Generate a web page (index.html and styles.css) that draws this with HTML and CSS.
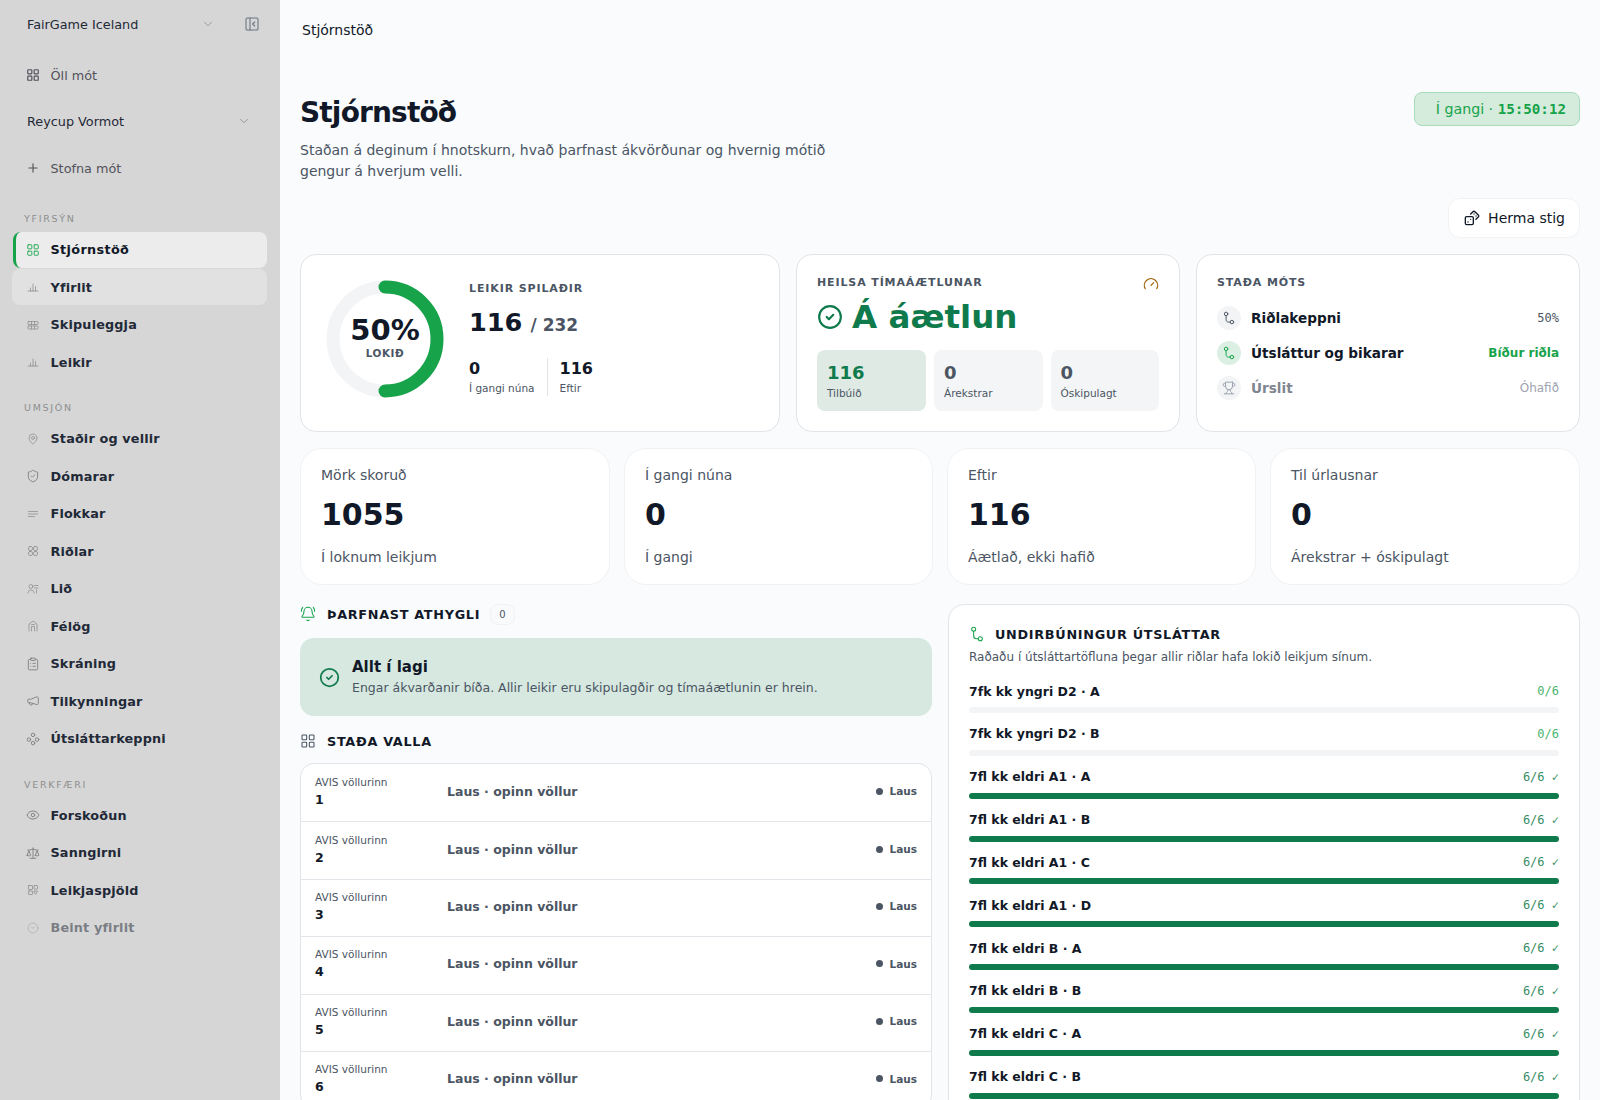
FILE: index.html
```html
<!DOCTYPE html>
<html lang="is">
<head>
  <meta charset="UTF-8">
  <meta name="viewport" content="width=device-width, initial-scale=1.0">
  <title>Stjórnstöð</title>
  <link rel="stylesheet" href="styles.css">
</head>
<body>
<svg class="sprite" xmlns="http://www.w3.org/2000/svg">
  <symbol id="i-grid" viewBox="0 0 24 24"><rect x="3" y="3" width="7" height="7" rx="1"/><rect x="14" y="3" width="7" height="7" rx="1"/><rect x="14" y="14" width="7" height="7" rx="1"/><rect x="3" y="14" width="7" height="7" rx="1"/></symbol>
  <symbol id="i-chevron" viewBox="0 0 24 24"><path d="m6 9 6 6 6-6"/></symbol>
  <symbol id="i-panel" viewBox="0 0 24 24"><rect x="3" y="3" width="18" height="18" rx="2"/><path d="M9 3v18"/><path d="m16 15-3-3 3-3"/></symbol>
  <symbol id="i-plus" viewBox="0 0 24 24"><path d="M5 12h14"/><path d="M12 5v14"/></symbol>
  <symbol id="i-bars" viewBox="0 0 24 24"><path d="M2 20h20"/><path d="M7 20v-6"/><path d="M12 20V6"/><path d="M17 20v-9"/></symbol>
  <symbol id="i-rows" viewBox="0 0 24 24"><rect x="2" y="5" width="20" height="6" rx="1"/><rect x="2" y="14" width="20" height="6" rx="1"/><path d="M9 5v6"/><path d="M15 5v6"/><path d="M9 14v6"/><path d="M15 14v6"/></symbol>
  <symbol id="i-pin" viewBox="0 0 24 24"><path d="M20 10c0 4.993-5.539 10.193-7.399 11.799a1 1 0 0 1-1.202 0C9.539 20.193 4 14.993 4 10a8 8 0 0 1 16 0"/><circle cx="12" cy="10" r="3"/></symbol>
  <symbol id="i-shield" viewBox="0 0 24 24"><path d="M20 13c0 5-3.5 7.5-7.66 8.95a1 1 0 0 1-.67-.01C7.5 20.5 4 18 4 13V6a1 1 0 0 1 1-1c2 0 4.5-1.2 6.24-2.72a1.17 1.17 0 0 1 1.52 0C14.51 3.81 17 5 19 5a1 1 0 0 1 1 1z"/><path d="m9 12 2 2 4-4"/></symbol>
  <symbol id="i-lines" viewBox="0 0 24 24"><path d="M3 7h18"/><path d="M3 12h18"/><path d="M3 17h12"/></symbol>
  <symbol id="i-groups" viewBox="0 0 24 24"><rect x="3" y="3" width="8" height="8" rx="3"/><rect x="13" y="3" width="8" height="8" rx="3"/><rect x="3" y="13" width="8" height="8" rx="3"/><rect x="13" y="13" width="8" height="8" rx="3"/></symbol>
  <symbol id="i-users" viewBox="0 0 24 24"><circle cx="8" cy="7" r="4"/><path d="M2 20c0-4 3-6 6-6s6 2 6 6"/><path d="M15 5h7"/><path d="M15 10h7"/><path d="M19 14v6"/></symbol>
  <symbol id="i-club" viewBox="0 0 24 24"><path d="M4 22V8l8-6 8 6v14"/><path d="M9 22v-9h6v9"/><path d="M9 9h6"/></symbol>
  <symbol id="i-clipboard" viewBox="0 0 24 24"><rect x="8" y="2" width="8" height="4" rx="1"/><path d="M16 4h2a2 2 0 0 1 2 2v14a2 2 0 0 1-2 2H6a2 2 0 0 1-2-2V6a2 2 0 0 1 2-2h2"/><path d="M12 11h4"/><path d="M12 16h4"/><path d="M8 11h.01"/><path d="M8 16h.01"/></symbol>
  <symbol id="i-megaphone" viewBox="0 0 24 24"><path d="M3 10a1 1 0 0 1 1-1h4l10-4a2 2 0 0 1 3 2v9a2 2 0 0 1-3 2L8 15H4a1 1 0 0 1-1-1z"/><path d="M11.6 16.8a3 3 0 1 1-5.8-1.6"/></symbol>
  <symbol id="i-bracket" viewBox="0 0 24 24"><circle cx="12" cy="5" r="3"/><circle cx="5" cy="13" r="3"/><circle cx="19" cy="13" r="3"/><circle cx="12" cy="19" r="3"/></symbol>
  <symbol id="i-eye" viewBox="0 0 24 24"><path d="M2.06 12.35a1 1 0 0 1 0-.7 10.75 10.75 0 0 1 19.88 0 1 1 0 0 1 0 .7 10.75 10.75 0 0 1-19.88 0"/><circle cx="12" cy="12" r="3"/></symbol>
  <symbol id="i-scale" viewBox="0 0 24 24"><path d="m16 16 3-8 3 8c-.87.65-1.92 1-3 1s-2.13-.35-3-1Z"/><path d="m2 16 3-8 3 8c-.87.65-1.92 1-3 1s-2.13-.35-3-1Z"/><path d="M7 21h10"/><path d="M12 3v18"/><path d="M3 7h2c2 0 5-1 7-2 2 1 5 2 7 2h2"/></symbol>
  <symbol id="i-cards" viewBox="0 0 24 24"><rect x="3" y="3" width="8" height="8" rx="1"/><rect x="14" y="3" width="7" height="7" rx="1"/><rect x="3" y="14" width="8" height="7" rx="1"/><path d="M14 14h7l-3.5 6z"/></symbol>
  <symbol id="i-clock" viewBox="0 0 24 24"><circle cx="12" cy="12" r="10"/><path d="m9 10 3 3 3-3"/></symbol>
  <symbol id="i-gauge" viewBox="0 0 24 24"><path d="m12 14 4-4"/><path d="M3.34 19a10 10 0 1 1 17.32 0"/></symbol>
  <symbol id="i-check" viewBox="0 0 24 24"><circle cx="12" cy="12" r="10"/><path d="m9 12 2 2 4-4"/></symbol>
  <symbol id="i-route" viewBox="0 0 24 24"><circle cx="7" cy="5" r="3"/><path d="M7 8v7c0 2 1.5 4 4 4h3"/><circle cx="17" cy="19" r="3"/></symbol>
  <symbol id="i-trophy" viewBox="0 0 24 24"><path d="M6 9H4.5a2.5 2.5 0 0 1 0-5H6"/><path d="M18 9h1.5a2.5 2.5 0 0 0 0-5H18"/><path d="M4 22h16"/><path d="M10 14.66V17c0 .55-.47.98-.97 1.21C7.85 18.75 7 20.24 7 22"/><path d="M14 14.66V17c0 .55.47.98.97 1.21C16.15 18.75 17 20.24 17 22"/><path d="M18 2H6v7a6 6 0 0 0 12 0V2Z"/></symbol>
  <symbol id="i-dices" viewBox="0 0 24 24"><rect x="2" y="10" width="12" height="12" rx="2"/><path d="m17.92 14 3.5-3.5a2.24 2.24 0 0 0 0-3l-5-4.92a2.24 2.24 0 0 0-3 0L10 6"/><path d="M6 18h.01"/><path d="M10 14h.01"/><path d="M15 6h.01"/><path d="M18 9h.01"/></symbol>
  <symbol id="i-bell" viewBox="0 0 24 24"><path d="M10.268 21a2 2 0 0 0 3.464 0"/><path d="M22 8c0-2.3-.8-4.3-2-6"/><path d="M3.262 15.326A1 1 0 0 0 4 17h16a1 1 0 0 0 .74-1.673C19.41 13.956 18 12.499 18 8A6 6 0 0 0 6 8c0 4.499-1.411 5.956-2.738 7.326"/><path d="M4 2C2.8 3.7 2 5.7 2 8"/></symbol>
</svg>

<div class="app">
  <aside class="sidebar">
    <div class="side-top">
      <span class="org">FairGame Iceland</span>
      <svg class="ic ic-chev"><use href="#i-chevron"/></svg>
      <svg class="ic ic-panel"><use href="#i-panel"/></svg>
    </div>
    <a class="side-link"><svg class="ic"><use href="#i-grid"/></svg>Öll mót</a>
    <div class="side-select">
      <span>Reycup Vormot</span>
      <svg class="ic ic-chev"><use href="#i-chevron"/></svg>
    </div>
    <a class="side-link side-link-new"><svg class="ic"><use href="#i-plus"/></svg>Stofna mót</a>

    <nav class="nav-group nav-first">
      <div class="nav-label">YFIRSÝN</div>
      <a class="nav-item active"><svg class="ic"><use href="#i-grid"/></svg>Stjórnstöð</a>
      <a class="nav-item hover"><svg class="ic ic-sm"><use href="#i-bars"/></svg>Yfirlit</a>
      <a class="nav-item"><svg class="ic ic-sm"><use href="#i-rows"/></svg>Skipuleggja</a>
      <a class="nav-item"><svg class="ic ic-sm"><use href="#i-bars"/></svg>Leikir</a>
    </nav>
    <nav class="nav-group">
      <div class="nav-label">UMSJÓN</div>
      <a class="nav-item"><svg class="ic ic-sm"><use href="#i-pin"/></svg>Staðir og vellir</a>
      <a class="nav-item"><svg class="ic"><use href="#i-shield"/></svg>Dómarar</a>
      <a class="nav-item"><svg class="ic ic-sm"><use href="#i-lines"/></svg>Flokkar</a>
      <a class="nav-item"><svg class="ic ic-sm"><use href="#i-groups"/></svg>Riðlar</a>
      <a class="nav-item"><svg class="ic ic-sm"><use href="#i-users"/></svg>Lið</a>
      <a class="nav-item"><svg class="ic ic-sm"><use href="#i-club"/></svg>Félög</a>
      <a class="nav-item"><svg class="ic"><use href="#i-clipboard"/></svg>Skráning</a>
      <a class="nav-item"><svg class="ic"><use href="#i-megaphone"/></svg>Tilkynningar</a>
      <a class="nav-item"><svg class="ic"><use href="#i-bracket"/></svg>Útsláttarkeppni</a>
    </nav>
    <nav class="nav-group">
      <div class="nav-label">VERKFÆRI</div>
      <a class="nav-item"><svg class="ic"><use href="#i-eye"/></svg>Forskoðun</a>
      <a class="nav-item"><svg class="ic"><use href="#i-scale"/></svg>Sanngirni</a>
      <a class="nav-item"><svg class="ic ic-sm"><use href="#i-cards"/></svg>Leikjaspjöld</a>
      <a class="nav-item muted"><svg class="ic ic-sm"><use href="#i-clock"/></svg>Beint yfirlit</a>
    </nav>
  </aside>

  <main class="main">
    <div class="topbar">Stjórnstöð</div>

    <header class="page-head">
      <div>
        <h1>Stjórnstöð</h1>
        <p class="lead">Staðan á deginum í hnotskurn, hvað þarfnast ákvörðunar og hvernig mótið gengur á hverjum velli.</p>
      </div>
      <div class="live-pill">Í gangi · <span class="mono">15:50:12</span></div>
    </header>

    <div class="actions">
      <button class="btn"><svg class="ic ic-btn"><use href="#i-dices"/></svg>Herma stig</button>
    </div>

    <section class="hero-row">
      <div class="card progress-card">
        <div class="ring">
          <svg viewBox="0 0 118 118">
            <circle class="ring-track" cx="59" cy="59" r="52"/>
            <path class="ring-fill" d="M59 7a52 52 0 0 1 0 104"/>
          </svg>
          <div class="ring-text">
            <strong>50%</strong>
            <span>LOKIÐ</span>
          </div>
        </div>
        <div class="progress-info">
          <div class="eyebrow">LEIKIR SPILAÐIR</div>
          <div class="played"><strong>116</strong> <span>/ 232</span></div>
          <div class="split">
            <div class="split-cell"><b>0</b><small>Í gangi núna</small></div>
            <div class="split-cell"><b>116</b><small>Eftir</small></div>
          </div>
        </div>
      </div>

      <div class="card health-card">
        <div class="health-top">
          <div class="eyebrow">HEILSA TÍMAÁÆTLUNAR</div>
          <svg class="ic ic-gauge"><use href="#i-gauge"/></svg>
        </div>
        <div class="health-state"><svg class="ic"><use href="#i-check"/></svg>Á áætlun</div>
        <div class="tiles">
          <div class="tile ok"><b>116</b><small>Tilbúið</small></div>
          <div class="tile"><b>0</b><small>Árekstrar</small></div>
          <div class="tile"><b>0</b><small>Óskipulagt</small></div>
        </div>
      </div>

      <div class="card stage-card">
        <div class="eyebrow">STAÐA MÓTS</div>
        <div class="stage">
          <span class="stage-ic"><svg class="ic"><use href="#i-route"/></svg></span>
          <b>Riðlakeppni</b>
          <span class="stage-val mono">50%</span>
        </div>
        <div class="stage on">
          <span class="stage-ic"><svg class="ic"><use href="#i-route"/></svg></span>
          <b>Útsláttur og bikarar</b>
          <span class="stage-val">Bíður riðla</span>
        </div>
        <div class="stage off">
          <span class="stage-ic"><svg class="ic"><use href="#i-trophy"/></svg></span>
          <b>Úrslit</b>
          <span class="stage-val">Óhafið</span>
        </div>
      </div>
    </section>

    <section class="stat-row">
      <div class="stat"><span>Mörk skoruð</span><strong>1055</strong><span>Í loknum leikjum</span></div>
      <div class="stat"><span>Í gangi núna</span><strong>0</strong><span>Í gangi</span></div>
      <div class="stat"><span>Eftir</span><strong>116</strong><span>Áætlað, ekki hafið</span></div>
      <div class="stat"><span>Til úrlausnar</span><strong>0</strong><span>Árekstrar + óskipulagt</span></div>
    </section>

    <section class="columns">
      <div class="col-left">
        <h2 class="sec-title"><svg class="ic ic-bell"><use href="#i-bell"/></svg>ÞARFNAST ATHYGLI<span class="count">0</span></h2>
        <div class="all-good">
          <svg class="ic"><use href="#i-check"/></svg>
          <div>
            <b>Allt í lagi</b>
            <p>Engar ákvarðanir bíða. Allir leikir eru skipulagðir og tímaáætlunin er hrein.</p>
          </div>
        </div>
        <h2 class="sec-title sec-fields"><svg class="ic"><use href="#i-grid"/></svg>STAÐA VALLA</h2>
        <div class="fields">
          <div class="field"><div class="field-name"><small>AVIS völlurinn</small><b>1</b></div><span class="field-text">Laus · opinn völlur</span><span class="field-state">Laus</span></div>
          <div class="field"><div class="field-name"><small>AVIS völlurinn</small><b>2</b></div><span class="field-text">Laus · opinn völlur</span><span class="field-state">Laus</span></div>
          <div class="field"><div class="field-name"><small>AVIS völlurinn</small><b>3</b></div><span class="field-text">Laus · opinn völlur</span><span class="field-state">Laus</span></div>
          <div class="field"><div class="field-name"><small>AVIS völlurinn</small><b>4</b></div><span class="field-text">Laus · opinn völlur</span><span class="field-state">Laus</span></div>
          <div class="field"><div class="field-name"><small>AVIS völlurinn</small><b>5</b></div><span class="field-text">Laus · opinn völlur</span><span class="field-state">Laus</span></div>
          <div class="field"><div class="field-name"><small>AVIS völlurinn</small><b>6</b></div><span class="field-text">Laus · opinn völlur</span><span class="field-state">Laus</span></div>
        </div>
      </div>

      <div class="card col-right">
        <h2 class="sec-title"><svg class="ic ic-route"><use href="#i-route"/></svg>UNDIRBÚNINGUR ÚTSLÁTTAR</h2>
        <p class="hint">Raðaðu í útsláttartöfluna þegar allir riðlar hafa lokið leikjum sínum.</p>
        <div class="group"><div class="group-row"><b>7fk kk yngri D2 · A</b><span class="mono pending">0/6</span></div><div class="bar"></div></div>
        <div class="group"><div class="group-row"><b>7fk kk yngri D2 · B</b><span class="mono pending">0/6</span></div><div class="bar"></div></div>
        <div class="group"><div class="group-row"><b>7fl kk eldri A1 · A</b><span class="mono done">6/6 ✓</span></div><div class="bar full"></div></div>
        <div class="group"><div class="group-row"><b>7fl kk eldri A1 · B</b><span class="mono done">6/6 ✓</span></div><div class="bar full"></div></div>
        <div class="group"><div class="group-row"><b>7fl kk eldri A1 · C</b><span class="mono done">6/6 ✓</span></div><div class="bar full"></div></div>
        <div class="group"><div class="group-row"><b>7fl kk eldri A1 · D</b><span class="mono done">6/6 ✓</span></div><div class="bar full"></div></div>
        <div class="group"><div class="group-row"><b>7fl kk eldri B · A</b><span class="mono done">6/6 ✓</span></div><div class="bar full"></div></div>
        <div class="group"><div class="group-row"><b>7fl kk eldri B · B</b><span class="mono done">6/6 ✓</span></div><div class="bar full"></div></div>
        <div class="group"><div class="group-row"><b>7fl kk eldri C · A</b><span class="mono done">6/6 ✓</span></div><div class="bar full"></div></div>
        <div class="group"><div class="group-row"><b>7fl kk eldri C · B</b><span class="mono done">6/6 ✓</span></div><div class="bar full"></div></div>
      </div>
    </section>
  </main>
</div>
</body>
</html>
```

FILE: styles.css
```css
:root {
  --ink: #111827;
  --ink-2: #4b5563;
  --line: #e1e4e8;
  --green: #16a34a;
  --deep-green: #0f7a4b;
}

* {
  box-sizing: border-box;
}

html, body {
  margin: 0;
  height: 100%;
  overflow: hidden;
}

body {
  font-family: "DejaVu Sans", sans-serif;
  color: var(--ink);
  background: #f9fbfd;
}

.sprite {
  display: none;
}

.ic {
  width: 16px;
  height: 16px;
  flex: none;
  fill: none;
  stroke: currentColor;
  stroke-width: 2;
  stroke-linecap: round;
  stroke-linejoin: round;
}

.mono {
  font-family: "DejaVu Sans Mono", monospace;
}

.app {
  display: flex;
  height: 100vh;
}

/* sidebar */
.sidebar {
  width: 280px;
  flex: none;
  background: #d6d6d6;
  padding: 8px 13px 0 12px;
}

.side-top {
  display: flex;
  align-items: center;
  height: 32px;
  padding-left: 15px;
  font-size: 12.8px;
  color: #1f2937;
}

.org {
  flex: 1;
}

.ic-chev {
  color: #8a8f96;
  width: 14px;
  height: 14px;
  stroke-width: 1.5;
}

.side-top .ic-chev {
  margin-right: 29px;
}

.ic-panel {
  color: #6b7280;
  width: 16px;
  height: 16px;
  stroke-width: 1.6;
  margin-right: 7px;
}

.side-link {
  display: flex;
  align-items: center;
  gap: 10.5px;
  height: 36px;
  margin-top: 17px;
  padding-left: 14px;
  font-size: 12.8px;
  color: #52525b;
}

.side-link .ic {
  width: 14px;
  height: 14px;
}

.side-link-new {
  margin-top: 11px;
}

.side-select {
  display: flex;
  align-items: center;
  justify-content: space-between;
  height: 36px;
  margin-top: 10px;
  padding: 0 16px 0 15px;
  font-size: 12.8px;
  color: #1f2937;
}

.nav-group {
  display: flex;
  flex-direction: column;
  gap: 1.5px;
  margin-top: 21px;
}

.nav-first {
  margin-top: 26px;
}

.nav-label {
  height: 14px;
  line-height: 14px;
  margin-bottom: 4px;
  padding-left: 12px;
  font-size: 9.5px;
  letter-spacing: 1.7px;
  color: #8e8e8e;
}

.nav-item {
  display: flex;
  align-items: center;
  gap: 10.5px;
  height: 36px;
  padding-left: 14px;
  border-radius: 8px;
  font-size: 12.8px;
  font-weight: 700;
  letter-spacing: 0.15px;
  color: #1f2937;
}

.nav-item .ic {
  width: 14px;
  height: 14px;
  color: #7d7d7d;
  stroke-width: 1.5;
}

.nav-item .ic-sm {
  width: 12px;
  height: 12px;
  margin: 0 1px;
  color: #8c8c8c;
}

.nav-item.active {
  margin-left: 1px;
  padding-left: 10px;
  border-left: 3px solid var(--green);
  background: #ececec;
  letter-spacing: 0.35px;
  color: #111827;
}

.nav-item.active .ic {
  color: var(--green);
}

.nav-item.hover {
  background: #e1e1e1;
}

.nav-item.muted {
  opacity: 0.5;
}

/* main column */
.main {
  flex: 1;
  min-width: 0;
  padding: 0 20px;
}

.topbar {
  height: 60px;
  padding: 21px 2px 0;
  font-size: 14px;
  line-height: 18px;
}

.page-head {
  display: flex;
  justify-content: space-between;
  align-items: flex-start;
  padding-top: 32px;
}

h1 {
  margin: 2px 0 0;
  font-size: 28px;
  line-height: 38px;
  font-weight: 700;
  letter-spacing: -0.84px;
}

.lead {
  width: 560px;
  margin: 8px 0 0;
  font-size: 14px;
  line-height: 21px;
  color: var(--ink-2);
}

.live-pill {
  height: 34px;
  padding: 0 13px 0 21px;
  line-height: 32px;
  border: 1px solid #a8dcbb;
  border-radius: 8px;
  background: #d5ebdc;
  font-size: 14.2px;
  color: var(--green);
}

.live-pill .mono {
  font-weight: 700;
}

.actions {
  display: flex;
  justify-content: flex-end;
  margin-top: 16px;
}

.btn {
  display: flex;
  align-items: center;
  gap: 8px;
  height: 40px;
  padding: 0 14px 0 15px;
  border: 1px solid #f0f2f4;
  border-radius: 12px;
  background: #fff;
  font: inherit;
  font-size: 14px;
  color: var(--ink);
}

.card {
  background: #fff;
  border: 1px solid var(--line);
  border-radius: 16px;
}

.eyebrow {
  font-size: 11px;
  line-height: 14px;
  font-weight: 700;
  letter-spacing: 0.88px;
  color: var(--ink-2);
}

.hero-row {
  display: grid;
  grid-template-columns: 480px 384px 1fr;
  gap: 16px;
  height: 178px;
  margin-top: 16px;
}

.progress-card {
  display: flex;
  gap: 25px;
  padding: 25px 0 0 25px;
}

.ring {
  position: relative;
  width: 118px;
  height: 118px;
  flex: none;
}

.ring svg {
  display: block;
  width: 118px;
  height: 118px;
  fill: none;
  stroke-width: 13;
  stroke-linecap: round;
}

.ring-track {
  stroke: #f3f4f6;
}

.ring-fill {
  stroke: var(--green);
}

.ring-text {
  position: absolute;
  inset: 0;
  display: flex;
  flex-direction: column;
  align-items: center;
  justify-content: center;
  padding-bottom: 5px;
}

.ring-text strong {
  margin-bottom: 1px;
  font-size: 29px;
  line-height: 32px;
}

.ring-text span {
  font-size: 10.4px;
  line-height: 13px;
  font-weight: 700;
  letter-spacing: 0.6px;
  color: var(--ink-2);
}

.progress-info {
  padding-top: 2px;
}

.played {
  margin-top: 9px;
  line-height: 34px;
}

.played strong {
  font-size: 25.6px;
}

.played span {
  margin-left: 3px;
  font-size: 17px;
  font-weight: 700;
  color: var(--ink-2);
}

.split {
  display: flex;
  margin-top: 15px;
}

.split-cell {
  display: flex;
  flex-direction: column;
  padding-right: 12px;
}

.split-cell + .split-cell {
  padding-left: 12px;
  border-left: 1px solid var(--line);
}

.split-cell b {
  font-size: 16px;
  line-height: 21px;
}

.split-cell small {
  margin-top: 1px;
  font-size: 10.5px;
  line-height: 16px;
  color: var(--ink-2);
}

.health-card {
  padding: 21px 20px 0;
}

.health-top {
  display: flex;
  justify-content: space-between;
  height: 14px;
}

.ic-gauge {
  color: #a16207;
  stroke-width: 1.8;
  margin-top: 0;
}

.health-state {
  display: flex;
  align-items: center;
  gap: 9px;
  margin-top: 5px;
  font-size: 32.5px;
  line-height: 44px;
  font-weight: 700;
  color: var(--deep-green);
}

.health-state .ic {
  width: 26px;
  height: 26px;
}

.tiles {
  display: grid;
  grid-template-columns: 109px 1fr 1fr;
  gap: 8px;
  margin-top: 11px;
}

.tile {
  display: flex;
  flex-direction: column;
  height: 61px;
  padding: 11px 10px 0;
  border-radius: 8px;
  background: #f3f5f6;
  color: var(--ink-2);
}

.tile b {
  font-size: 18px;
  line-height: 23px;
}

.tile small {
  margin-top: 2px;
  font-size: 10.5px;
  line-height: 15px;
}

.tile.ok {
  background: #dfeae5;
  color: var(--deep-green);
}

.tile.ok small {
  color: var(--ink-2);
}

.stage-card {
  padding: 21px 20px 0;
}

.stage {
  display: flex;
  align-items: center;
  height: 24px;
  margin-top: 11px;
  font-size: 13.6px;
}

.stage:nth-child(2) {
  margin-top: 16px;
}

.stage b {
  flex: 1;
  margin-left: 10px;
}

.stage-ic {
  display: flex;
  align-items: center;
  justify-content: center;
  width: 24px;
  height: 24px;
  border-radius: 50%;
  background: #f3f4f6;
  color: var(--ink-2);
}

.stage-ic .ic {
  width: 14px;
  height: 14px;
  stroke-width: 1.7;
}

.stage-val {
  font-size: 12px;
  color: var(--ink-2);
}

.stage.on .stage-ic {
  background: #dcefe3;
  color: var(--green);
}

.stage.on .stage-val {
  font-weight: 700;
  color: var(--green);
}

.stage.off {
  color: #9ca3af;
}

.stage.off .stage-ic {
  color: #9ca3af;
}

.stage.off b {
  color: #808690;
}

.stage.off .stage-val {
  color: #9ca3af;
}

.stat-row {
  display: grid;
  grid-template-columns: 310px 309px 309px 1fr;
  gap: 14px;
  height: 137px;
  margin-top: 16px;
}

.stat {
  display: flex;
  flex-direction: column;
  padding: 17px 20px 0;
  background: #fff;
  border: 1px solid #f0f2f4;
  border-radius: 22px;
  font-size: 14px;
  line-height: 18px;
  color: var(--ink-2);
}

.stat strong {
  margin: 11px 0 13px;
  font-size: 30px;
  line-height: 40px;
  color: var(--ink);
}

.columns {
  display: grid;
  grid-template-columns: 632px 632px;
  gap: 16px;
  align-items: start;
  margin-top: 19px;
}

.sec-title {
  display: flex;
  align-items: center;
  gap: 11px;
  height: 20px;
  margin: 0;
  font-size: 12.8px;
  font-weight: 700;
  letter-spacing: 0.7px;
}

.sec-title .ic {
  color: var(--ink-2);
  stroke-width: 1.6;
}

.sec-title .ic-bell, .sec-title .ic-route {
  color: var(--green);
}

.count {
  margin-left: -1px;
  padding: 0 8px;
  height: 21px;
  line-height: 20px;
  border: 1px solid #f0f2f4;
  border-radius: 8px;
  background: #f9fafb;
  font-size: 10px;
  font-weight: 400;
  letter-spacing: 0;
  color: var(--ink-2);
}

.all-good {
  display: flex;
  align-items: center;
  gap: 12px;
  height: 78px;
  margin-top: 14px;
  padding: 0 19px;
  border-radius: 14px;
  background: #d6e8e0;
}

.all-good .ic {
  width: 21px;
  height: 21px;
  color: var(--deep-green);
}

.all-good b {
  display: block;
  font-size: 15px;
  line-height: 20px;
}

.all-good p {
  margin: 2px 0 0;
  font-size: 12.5px;
  line-height: 18px;
  color: var(--ink-2);
}

.sec-fields {
  margin-top: 15px;
}

.fields {
  margin-top: 12px;
  background: #fff;
  border: 1px solid var(--line);
  border-radius: 14px;
}

.field {
  display: flex;
  align-items: center;
  height: 57.4px;
  padding: 0 14px 3px;
  border-top: 1px solid var(--line);
}

.field:first-child {
  border-top: 0;
}

.field-name {
  display: flex;
  flex-direction: column;
  width: 132px;
}

.field-name small {
  font-size: 10.5px;
  line-height: 15px;
  color: var(--ink-2);
}

.field-name b {
  margin-top: 2px;
  font-size: 12.5px;
  line-height: 16px;
}

.field-text {
  flex: 1;
  font-size: 12.5px;
  font-weight: 700;
  color: var(--ink-2);
}

.field-state {
  display: flex;
  align-items: center;
  gap: 6px;
  font-size: 10.5px;
  font-weight: 700;
  color: var(--ink-2);
}

.field-state::before {
  content: "";
  width: 7px;
  height: 7px;
  border-radius: 50%;
  background: #4b5563;
}

.col-right {
  padding: 19px 20px 24px;
}

.col-right .sec-title {
  gap: 10px;
}

.hint {
  margin: 4px 0 16px;
  font-size: 12px;
  line-height: 18px;
  color: var(--ink-2);
}

.group {
  margin-top: 11.85px;
}

.group-row {
  display: flex;
  justify-content: space-between;
  align-items: center;
  height: 18px;
  font-size: 12.5px;
}

.group-row .mono {
  font-size: 12px;
}

.pending {
  color: var(--green);
  opacity: 0.8;
}

.done {
  color: var(--deep-green);
  opacity: 0.85;
}

.bar {
  height: 6px;
  margin-top: 7px;
  border-radius: 3px;
  background: #f3f4f6;
}

.bar.full {
  background: var(--deep-green);
}
```
